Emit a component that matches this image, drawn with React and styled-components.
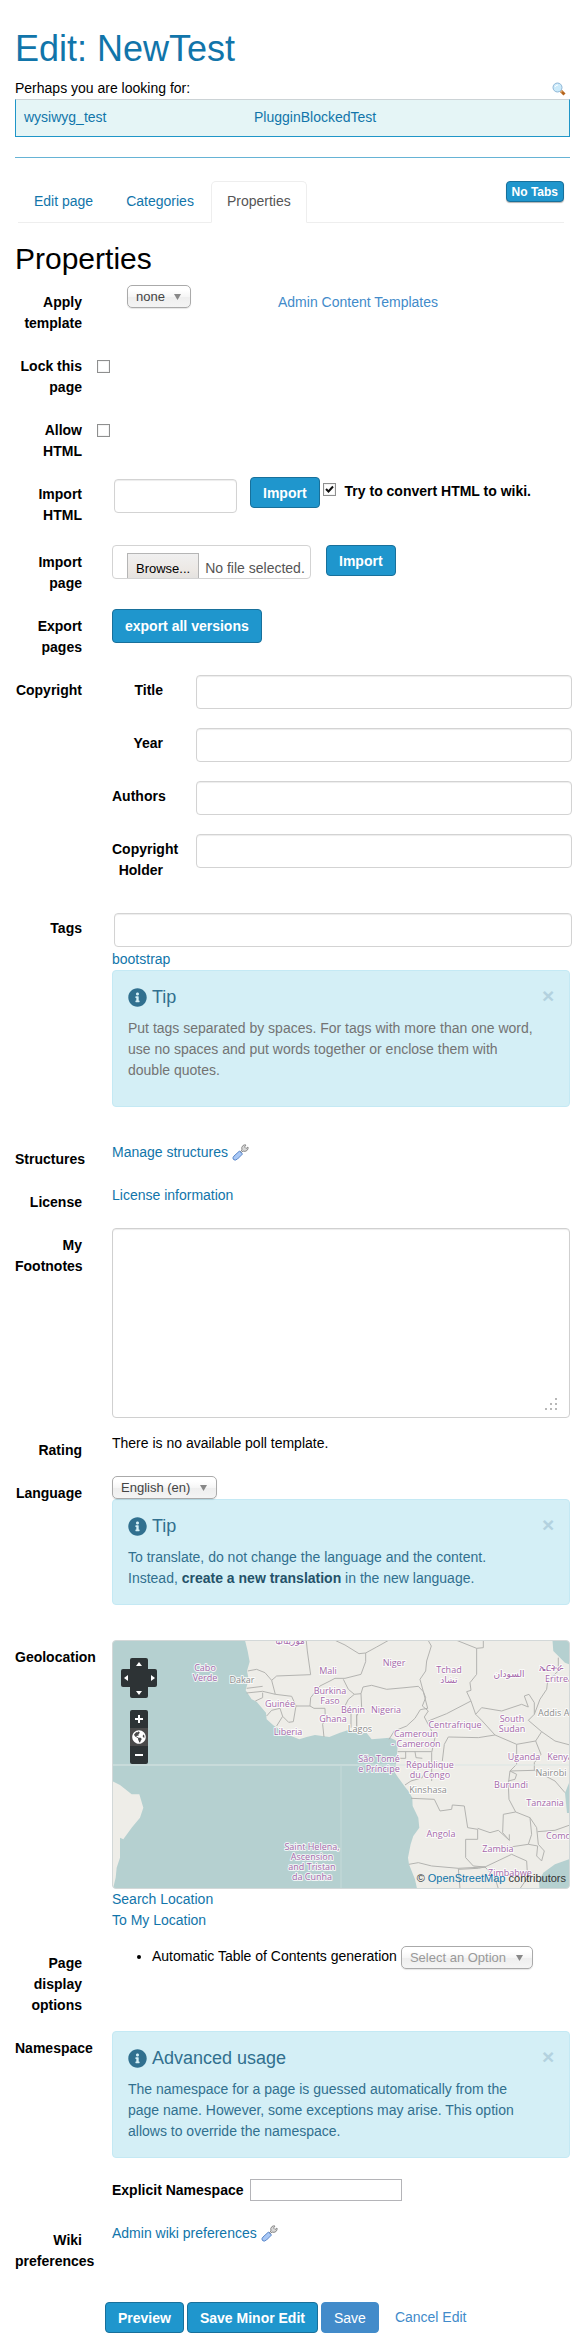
import React from "react";
import styled, { createGlobalStyle } from "styled-components";
import { FaInfoCircle, FaGlobeAmericas } from "react-icons/fa";

const GlobalStyle = createGlobalStyle`
  * {
    box-sizing: border-box;
  }
  body {
    margin: 0;
    background: white;
    color: #000;
    font: 14px/21px "Liberation Sans", Arial, sans-serif;
  }
  button, input, select, textarea {
    font-family: inherit;
  }
`;

const Page = styled.main`
  padding: 29px 9px 10px 15px;
`;

const Title = styled.h1`
  margin: 0 0 9px;
  font-size: 36px;
  font-weight: 400;
  line-height: 40px;
  color: #1175aa;
`;

const Link = styled.a`
  color: ${({ $light }) => ($light ? "#428bca" : "#1175aa")};
  text-decoration: none;
`;

const Similar = styled.div`
  display: flex;
  justify-content: space-between;
  align-items: center;
  padding-right: 4px;
`;

const SimilarBox = styled.div`
  display: grid;
  grid-template-columns: 230px 1fr;
  padding: 7px 8px 8px;
  border: 1px solid #1f96c8;
  border-top-color: #ccd3d6;
  background: #e5f5f6;
`;

const Divider = styled.hr`
  margin: 20px 0 23px;
  border: 0;
  border-top: 1px solid #66b3d5;
`;

const Tabs = styled.nav`
  display: flex;
  align-items: flex-start;
  gap: 1px;
  margin: 0 6px 19px 3px;
  border-bottom: 1px solid #eee;
`;

const Tab = styled.a`
  margin-bottom: -1px;
  padding: 9px 15px 10px;
  border: 1px solid ${({ $active }) => ($active ? "#eee" : "transparent")};
  border-bottom-color: ${({ $active }) => ($active ? "white" : "transparent")};
  border-radius: 5px 5px 0 0;
  color: ${({ $active }) => ($active ? "#555" : "#1175aa")};
  text-decoration: none;
`;

const Button = styled.button`
  display: inline-flex;
  align-items: center;
  justify-content: center;
  height: ${({ $tall }) => ($tall ? "34px" : "31px")};
  padding: 0 12px;
  border: 1px solid ${({ $plain }) => ($plain ? "#428bca" : "#18709b")};
  border-radius: 4px;
  background: ${({ $plain }) => ($plain ? "#428bca" : "#1f96cd")};
  color: white;
  font-size: 14px;
  font-weight: ${({ $plain }) => ($plain ? 400 : 700)};
  white-space: nowrap;
`;

const SmallButton = styled(Button)`
  height: 21px;
  margin-left: auto;
  padding: 0 5px;
  font-size: 12px;
  box-shadow: 0 1px 1px rgba(0, 0, 0, 0.3);
`;

const Heading = styled.h2`
  margin: 0 0 10px;
  font-size: 30px;
  font-weight: 400;
  line-height: 33px;
`;

const RowBlock = styled.div`
  display: grid;
  grid-template-columns: 67px minmax(0, 1fr);
  gap: 30px;
  margin-bottom: 15px;
`;

const Label = styled.label`
  display: block;
  padding-top: 7px;
  font-weight: 700;
  text-align: right;
`;

const Inline = styled.div`
  display: flex;
  align-items: flex-start;
  gap: ${({ $gap }) => $gap || 0}px;
`;

const TemplateFields = styled.div`
  display: grid;
  grid-template-columns: 151px 1fr;
  justify-items: start;
  padding-left: 15px;
`;

const TemplateLink = styled(Link)`
  padding-top: 7px;
`;

const SelectBox = styled.span`
  display: inline-block;
  position: relative;
  height: 23px;
  svg {
    position: absolute;
    right: 10px;
    top: 9px;
    pointer-events: none;
  }
`;

const SelectInput = styled.select`
  appearance: none;
  display: block;
  height: 23px;
  padding: 0 25px 0 8px;
  border: 1px solid #aaa;
  border-radius: 5px;
  background: linear-gradient(#fff 20%, #f6f6f6 50%, #eee 52%, #f4f4f4 100%);
  box-shadow: 0 1px 1px rgba(0, 0, 0, 0.1);
  color: ${({ $muted }) => ($muted ? "#999" : "#444")};
  font-size: 13px;
`;

const CheckBox = styled.span`
  position: relative;
  display: block;
  width: 13px;
  height: 13px;
  margin: ${({ $margin }) => $margin};
  svg {
    position: absolute;
    left: 2px;
    top: 2px;
    display: none;
    pointer-events: none;
  }
  input:checked + svg {
    display: block;
  }
`;

const CheckInput = styled.input`
  appearance: none;
  display: block;
  width: 13px;
  height: 13px;
  margin: 0;
  border: 1px solid #8e8f8f;
  background: white;
  box-shadow: inset 0 0 0 1px #f4f4f4;
`;

const CheckLabel = styled.label`
  padding: 4px 0 0 9px;
  font-weight: 700;
`;

const TextInput = styled.input`
  display: block;
  width: 100%;
  height: 34px;
  margin: 2px;
  padding: 6px 12px;
  border: 1px solid #d3d3d3;
  border-radius: 4px;
  box-shadow: inset 0 1px 1px rgba(0, 0, 0, 0.075);
  font-size: 14px;
`;

const HtmlFields = styled.div`
  display: grid;
  grid-template-columns: 123px auto auto 1fr;
  align-items: start;
  padding-bottom: 15px;
  button {
    margin-left: 15px;
  }
`;

const FileBox = styled.label`
  display: flex;
  align-items: flex-start;
  gap: 6px;
  width: 199px;
  height: 34px;
  padding: 7px 0 0 14px;
  border: 1px solid #d3d3d3;
  border-radius: 4px;
  overflow: hidden;
  color: #555;
  font-size: 13px;
  white-space: nowrap;
  input {
    position: absolute;
    width: 1px;
    height: 1px;
    opacity: 0;
  }
`;

const Browse = styled.span`
  flex: none;
  height: 34px;
  padding: 4px 8px;
  border: 1px solid #b5b5b5;
  background: linear-gradient(#f0f0f0, #ece8e4 50%, #dcdcdc);
  color: #000;
`;

const FileName = styled.span`
  padding-top: 5px;
  font-size: 14px;
`;

const SubRow = styled.div`
  display: grid;
  grid-template-columns: 51px minmax(0, 1fr);
  gap: 31px;
  margin-bottom: 15px;
`;

const Alert = styled.div`
  display: grid;
  grid-template-columns: minmax(0, 1fr) 12px;
  column-gap: 8px;
  margin-bottom: 20px;
  padding: 15px;
  border: 1px solid #c4e9f4;
  border-radius: 4px;
  background: #d4eff6;
  color: #31708f;
`;

const AlertTitle = styled.h4`
  display: flex;
  align-items: center;
  gap: 5px;
  margin: 0 0 10px;
  font-size: 18px;
  font-weight: 400;
  line-height: 22px;
`;

const AlertText = styled.p`
  grid-column: 1;
  margin: 0;
  padding-bottom: ${({ $hint }) => ($hint ? "10px" : "0")};
  color: ${({ $hint }) => ($hint ? "#737373" : "inherit")};
  strong {
    color: #245269;
  }
`;

const Close = styled.button`
  height: 20px;
  padding: 0;
  border: 0;
  background: none;
  color: #b3d2df;
  font-size: 21px;
  font-weight: 700;
  line-height: 20px;
`;

const IconLink = styled(Link)`
  display: flex;
  align-items: center;
  gap: 4px;
  height: 21px;
`;

const NotesBox = styled.div`
  position: relative;
  svg {
    position: absolute;
    right: 13px;
    bottom: 8px;
    pointer-events: none;
  }
`;

const Notes = styled.textarea`
  display: block;
  width: 100%;
  height: 190px;
  padding: 6px 12px;
  border: 1px solid #d0d0d0;
  border-radius: 4px;
  box-shadow: inset 0 1px 1px rgba(0, 0, 0, 0.075);
  resize: none;
`;

const MapBox = styled.div`
  position: relative;
  height: 249px;
  border: 1px solid #d3d8d8;
  border-radius: 4px;
  overflow: hidden;
  background: #b5d0d0;
`;

const MapDrawing = styled.svg`
  display: block;
  width: 100%;
  height: 100%;
  font: 9px "Open Sans", "Noto Sans", "DejaVu Sans", sans-serif;
  text {
    text-anchor: middle;
    stroke: rgba(255, 255, 255, 0.8);
    stroke-width: 2px;
    stroke-linejoin: round;
    paint-order: stroke;
  }
`;

const Pan = styled.div`
  position: absolute;
  left: 8px;
  top: 17px;
  display: grid;
  grid-template-columns: 9px 18px 9px;
  grid-template-rows: 11px 18px 11px;
  grid-template-areas: ". up ." "left mid right" ". down .";
`;

const PanCenter = styled.span`
  grid-area: mid;
  background: #2d3335;
`;

const PanButton = styled.button`
  grid-area: ${({ $area }) => $area};
  display: flex;
  align-items: center;
  justify-content: center;
  padding: 0;
  border: 0;
  border-radius: ${({ $radius }) => $radius};
  background: #2d3335;
`;

const Zoom = styled.div`
  position: absolute;
  left: 17px;
  top: 69px;
  display: flex;
  flex-direction: column;
  width: 18px;
  border-radius: 2px;
  overflow: hidden;
`;

const ZoomButton = styled.button`
  display: flex;
  align-items: center;
  justify-content: center;
  height: 18px;
  padding: 0;
  border: 0;
  background: ${({ $mid }) => ($mid ? "#4a4a4a" : "#2d3335")};
  color: white;
`;

const Attribution = styled.div`
  position: absolute;
  right: 3px;
  bottom: 3px;
  font-size: 11px;
  line-height: 14px;
  color: #333;
`;

const Lines = styled.div`
  display: flex;
  flex-direction: column;
  align-items: flex-start;
`;

const Options = styled.ul`
  margin: 0;
  padding-left: 40px;
`;

const OptionRow = styled.span`
  display: flex;
  gap: 4px;
`;

const Namespace = styled.div`
  display: flex;
  align-items: flex-start;
  gap: 6px;
  height: 30px;
  label {
    padding-top: 2px;
    font-weight: 700;
  }
  input {
    width: 152px;
    height: 22px;
    margin-top: 1px;
    border: 1px solid #b4b4b8;
  }
`;

const Actions = styled.div`
  display: flex;
  align-items: center;
  gap: 3px;
  padding: 15px 0 0 90px;
  a {
    margin-left: 13px;
  }
`;

const Row = ({ label, id, children }) => (
  <RowBlock>
    <Label htmlFor={id} as={id ? "label" : "div"}>
      {label}
    </Label>
    <div>{children}</div>
  </RowBlock>
);

const Select = ({ id, value, muted, label }) => (
  <SelectBox>
    <SelectInput id={id} $muted={muted} aria-label={label}>
      <option>{value}</option>
    </SelectInput>
    <svg width="7" height="6" viewBox="0 0 7 6">
      <path d="M0 0H7L3.5 6Z" fill="#888" />
    </svg>
  </SelectBox>
);

const Check = ({ id, margin, checked }) => (
  <CheckBox $margin={margin}>
    <CheckInput id={id} type="checkbox" defaultChecked={checked} />
    <svg width="9" height="9" viewBox="0 0 9 9">
      <path d="M1 4L3.5 6.5L8 1.5" fill="none" stroke="#111" strokeWidth="2" />
    </svg>
  </CheckBox>
);

const Info = ({ title, hint, children }) => (
  <Alert>
    <AlertTitle>
      <FaInfoCircle size={19} />
      {title}
    </AlertTitle>
    <Close type="button" aria-label="Close">
      ×
    </Close>
    <AlertText $hint={hint}>{children}</AlertText>
  </Alert>
);

const Magnifier = () => (
  <svg width="14" height="14" viewBox="0 0 14 14">
    <path d="M9 9L12.5 12.5" stroke="#b5651d" strokeWidth="3" />
    <path d="M8.5 8.5L10 10" stroke="#e0a96d" strokeWidth="2" />
    <circle cx="5.5" cy="5.5" r="4.5" fill="#cbeafa" stroke="#8fb6d6" />
    <path d="M3 5Q3.500 3 6 3" fill="none" stroke="white" />
  </svg>
);

const Wrench = () => (
  <svg width="17" height="17" viewBox="0 0 17 17">
    <path
      d="M8 8L10 6Q9 3 11 1.500Q12.500.5 14 1L12.500 3L14 4.500L16 3Q16.500 5 15 6.500Q13 8 11 7L9 9Z"
      fill="#d8d8d8"
      stroke="#8c8c8c"
    />
    <path
      d="M7.500 7L10.500 10L5.500 15Q3 17 1.500 15.500Q0 14 2 12Z"
      fill="#a9c8f5"
      stroke="#5b87c9"
    />
  </svg>
);

const arrows = [
  { area: "up", name: "Pan up", radius: "2px 2px 0 0", d: "M0 5L3 1L6 5Z" },
  { area: "left", name: "Pan left", radius: "2px 0 0 2px", d: "M5 0L1 3L5 6Z" },
  { area: "right", name: "Pan right", radius: "0 2px 2px 0", d: "M1 0L5 3L1 6Z" },
  { area: "down", name: "Pan down", radius: "0 0 2px 2px", d: "M0 1L3 5L6 1Z" },
];

const places = [
  [177, 3, "موريتانيا"],
  [92, 30, "Cabo"],
  [92, 40, "Verde"],
  [215, 33, "Mali"],
  [217, 53, "Burkina"],
  [217, 63, "Faso"],
  [167, 66, "Guinée"],
  [220, 81, "Ghana"],
  [175, 94, "Liberia"],
  [281, 25, "Niger"],
  [336, 32, "Tchad"],
  [336, 42, "تشاد"],
  [396, 36, "السودان"],
  [438, 30, "ኤርትራ"],
  [446, 41, "Eritrea"],
  [240, 72, "Bénin"],
  [273, 72, "Nigeria"],
  [399, 81, "South"],
  [399, 91, "Sudan"],
  [342, 87, "Centrafrique"],
  [303, 96, "Cameroun"],
  [303, 106, "- Cameroon"],
  [266, 121, "São Tomé"],
  [266, 131, "e Príncipe"],
  [317, 127, "République"],
  [317, 137, "du Congo"],
  [411, 119, "Uganda"],
  [447, 119, "Kenya"],
  [398, 147, "Burundi"],
  [432, 165, "Tanzania"],
  [328, 196, "Angola"],
  [452, 198, "Comores"],
  [385, 211, "Zambia"],
  [397, 235, "Zimbabwe"],
  [199, 209, "Saint Helena,"],
  [199, 219, "Ascension"],
  [199, 229, "and Tristan"],
  [199, 239, "da Cunha"],
];

const cities = [
  [129, 42, "Dakar"],
  [247, 91, "Lagos"],
  [315, 152, "Kinshasa"],
  [446, 75, "Addis Aba"],
  [438, 135, "Nairobi"],
];

const MapView = () => (
  <MapBox>
    <MapDrawing viewBox="0 0 456 247" preserveAspectRatio="xMidYMid slice">
      {/* land */}
      <g fill="#eeede8" transform="translate(-13 -10) scale(0.3333)">
        <path d="M433 20L443 60L449 92L441 120L446 145L437 178L455 205L470 212L498 245L500 265L520 283L560 310L598 325L620 318L645 312L688 318L720 305L743 298L770 307L800 306L815 325L870 320L887 328L893 345L890 385L885 425L895 440L913 465L925 480L937 500L938 525L955 560L958 590L940 615L932 640L924 680L927 700L945 745L955 790H1320L1317 750L1330 725L1365 700L1420 680V105L1395 95L1375 75L1360 60L1357 20Z" />
        <path d="M30 447L60 462L95 490L118 490L130 530L120 560L95 590L70 625L60 620L60 680L50 710L47 740L35 790H20Z" />
      </g>
      {/* west african borders */}
      <g
        fill="none"
        stroke="#b3b3b0"
        strokeWidth="3"
        transform="translate(-13 -10) scale(0.3333)"
      >
        <path d="M443 120L470 115L495 125L515 148L530 135L632 131L622 60L618 20" />
        <path d="M515 148L526 190L488 181L440 186M440 172L488 166M526 190L575 196L588 225L580 272L566 274L548 256L530 285M488 185V200L466 210M500 255L515 238L540 232L548 256" />
        <path d="M588 225L630 225L642 232L675 232L676 262L668 280L672 318M630 225L632 200L660 165L690 150L705 142" />
      </g>
      {/* central and southern borders */}
      <g
        fill="none"
        stroke="#b3b3b0"
        strokeWidth="3"
        transform="translate(222 -10) scale(0.3333)"
      >
        <path d="M0 28L30 42L72 68L92 66L125 48L175 20M92 66V92L78 130L30 142L0 142M25 145L40 175L58 190L78 188L84 168L110 163L155 175L210 170L250 166L265 182M30 225L40 205L58 190M48 245V290M65 250V300M78 188L80 230L65 255V290" />
        <path d="M275 20L289 45L275 90L272 120L255 145L265 182L278 232L256 236L240 262L215 285L178 300L162 325M265 182L272 200L262 225L280 240L268 258L285 290L300 320L290 365M188 362H290M212 362V382H195M240 362L243 380L262 382" />
        <path d="M365 28L425 52V130L405 155L408 178L395 182L408 210L335 248L280 270M425 52L445 50V20M408 210L422 250L440 230L500 240L560 220L580 228L568 195L582 190L598 215V250L580 268L620 302L602 330L545 340L480 312L430 320L340 318L328 340L322 390" />
        <path d="M422 250L440 268L480 312M598 250L615 205L635 175L638 150L670 120V80M620 302L660 330L705 342M602 330L618 370L598 395V418L525 420L520 460L522 505L542 543L505 550L503 605L523 628V610M545 340V400L525 420M598 418L660 450L690 485M542 543L585 560L605 590L610 640L628 660L620 690L605 675L608 645L580 640L590 610L585 560" />
        <path d="M228 502L298 505L315 540L350 535L352 522L388 525L398 590L428 595V625L392 625V680L415 705L450 708L480 740L490 773M428 592L465 605L490 598L523 628M608 602L660 598L705 582M222 700L250 695L290 705L370 712L450 708M370 712L375 773M372 715L430 712L450 708M580 640L480 655M450 708L530 670L575 690L578 740L555 773M210 462L228 450L262 440L270 420M290 365V450M525 420L545 430L540 445L520 450" />
      </g>
      <path d="M456 142L452 152L454 172H456Z" fill="#b5d0d0" />
      <path d="M0 124H456" stroke="#dbe6e4" fill="none" />
      <path d="M228 124V247" stroke="#c5dad9" fill="none" />
      <g fill="#8d8d8d">
        {cities.map(([x, y, name]) => (
          <text key={name} x={x} y={y}>
            {name}
          </text>
        ))}
      </g>
      <g fill="#a569ab">
        {places.map(([x, y, name]) => (
          <text key={name} x={x} y={y}>
            {name}
          </text>
        ))}
      </g>
    </MapDrawing>
    <Pan>
      <PanCenter />
      {arrows.map((a) => (
        <PanButton
          key={a.area}
          type="button"
          $area={a.area}
          $radius={a.radius}
          aria-label={a.name}
        >
          <svg width="6" height="6">
            <path d={a.d} fill="white" />
          </svg>
        </PanButton>
      ))}
    </Pan>
    <Zoom>
      <ZoomButton type="button" aria-label="Zoom in">
        <svg width="8" height="8">
          <path d="M4 0V8M0 4H8" stroke="white" strokeWidth="2" />
        </svg>
      </ZoomButton>
      <ZoomButton type="button" aria-label="Zoom to world" $mid>
        <FaGlobeAmericas size={14} />
      </ZoomButton>
      <ZoomButton type="button" aria-label="Zoom out">
        <svg width="8" height="8">
          <path d="M0 4H8" stroke="white" strokeWidth="2" />
        </svg>
      </ZoomButton>
    </Zoom>
    <Attribution>
      © <Link href="#osm">OpenStreetMap</Link> contributors
    </Attribution>
  </MapBox>
);

const copyrightFields = [
  { id: "title", label: "Title" },
  { id: "year", label: "Year" },
  { id: "authors", label: "Authors" },
  { id: "holder", label: "Copyright Holder" },
];

const App = () => {
  return (
    <>
      <GlobalStyle />
      <Page>
        <Title>Edit: NewTest</Title>
        <Similar>
          <span>Perhaps you are looking for:</span>
          <Magnifier />
        </Similar>
        <SimilarBox>
          <Link href="#wysiwyg_test">wysiwyg_test</Link>
          <Link href="#PlugginBlockedTest">PlugginBlockedTest</Link>
        </SimilarBox>
        <Divider />
        <Tabs>
          <Tab href="#edit">Edit page</Tab>
          <Tab href="#categories">Categories</Tab>
          <Tab href="#properties" $active>
            Properties
          </Tab>
          <SmallButton type="button">No Tabs</SmallButton>
        </Tabs>

        <Heading>Properties</Heading>
        <Row label="Apply template" id="template">
          <TemplateFields>
            <Select id="template" value="none" />
            <TemplateLink href="#templates" $light>
              Admin Content Templates
            </TemplateLink>
          </TemplateFields>
        </Row>
        <Row label="Lock this page" id="lock">
          <Check id="lock" margin="11px 0 0 -15px" />
        </Row>
        <Row label="Allow HTML" id="html">
          <Check id="html" margin="11px 0 0 -15px" />
        </Row>
        <Row label="Import HTML" id="importHtml">
          <HtmlFields>
            <TextInput id="importHtml" type="text" />
            <Button type="button">Import</Button>
            <Check id="convert" margin="6px 0 0 3px" checked />
            <CheckLabel htmlFor="convert">Try to convert HTML to wiki.</CheckLabel>
          </HtmlFields>
        </Row>
        <Row label="Import page" id="importPage">
          <Inline $gap={15}>
            <FileBox>
              <input id="importPage" type="file" />
              <Browse>Browse...</Browse>
              <FileName>No file selected.</FileName>
            </FileBox>
            <Button type="button">Import</Button>
          </Inline>
        </Row>
        <Row label="Export pages">
          <Button type="button" $tall>
            export all versions
          </Button>
        </Row>
        <Row label="Copyright">
          {copyrightFields.map((f) => (
            <SubRow key={f.id}>
              <Label htmlFor={f.id}>{f.label}</Label>
              <TextInput id={f.id} type="text" />
            </SubRow>
          ))}
        </Row>
        <Row label="Tags" id="tags">
          <TextInput id="tags" type="text" />
          <Lines>
            <Link href="#bootstrap">bootstrap</Link>
          </Lines>
          <Info title="Tip" hint>
            Put tags separated by spaces. For tags with more than one word, use
            no spaces and put words together or enclose them with double quotes.
          </Info>
        </Row>
        <Row label="Structures">
          <IconLink href="#structures">
            Manage structures <Wrench />
          </IconLink>
        </Row>
        <Row label="License">
          <Link href="#license">License information</Link>
        </Row>
        <Row label="My Footnotes" id="notes">
          <NotesBox>
            <Notes id="notes" />
            <svg width="12" height="12" viewBox="0 0 12 12">
              <path
                d="M10 0h2v2h-2zM5 5h2v2h-2zM10 5h2v2h-2zM0 10h2v2h-2zM5 10h2v2h-2zM10 10h2v2h-2z"
                fill="#b8b8b8"
              />
            </svg>
          </NotesBox>
        </Row>
        <Row label="Rating">There is no available poll template.</Row>
        <Row label="Language" id="language">
          <Inline>
            <Select id="language" value="English (en)" />
          </Inline>
          <Info title="Tip">
            To translate, do not change the language and the content. Instead,{" "}
            <strong>create a new translation</strong> in the new language.
          </Info>
        </Row>
        <Row label="Geolocation">
          <MapView />
          <Lines>
            <Link href="#search">Search Location</Link>
            <Link href="#me">To My Location</Link>
          </Lines>
        </Row>
        <Row label="Page display options">
          <Options>
            <li>
              <OptionRow>
                Automatic Table of Contents generation
                <Select
                  value="Select an Option"
                  label="Automatic Table of Contents generation"
                  muted
                />
              </OptionRow>
            </li>
          </Options>
        </Row>
        <Row label="Namespace">
          <Info title="Advanced usage">
            The namespace for a page is guessed automatically from the page name.
            However, some exceptions may arise. This option allows to override
            the namespace.
          </Info>
          <Namespace>
            <label htmlFor="namespace">Explicit Namespace</label>
            <input id="namespace" type="text" />
          </Namespace>
        </Row>
        <Row label="Wiki preferences">
          <IconLink href="#preferences">
            Admin wiki preferences <Wrench />
          </IconLink>
        </Row>
        <Actions>
          <Button type="button">Preview</Button>
          <Button type="button">Save Minor Edit</Button>
          <Button type="button" $plain>
            Save
          </Button>
          <Link href="#cancel" $light>
            Cancel Edit
          </Link>
        </Actions>
      </Page>
    </>
  );
};

export default App;
